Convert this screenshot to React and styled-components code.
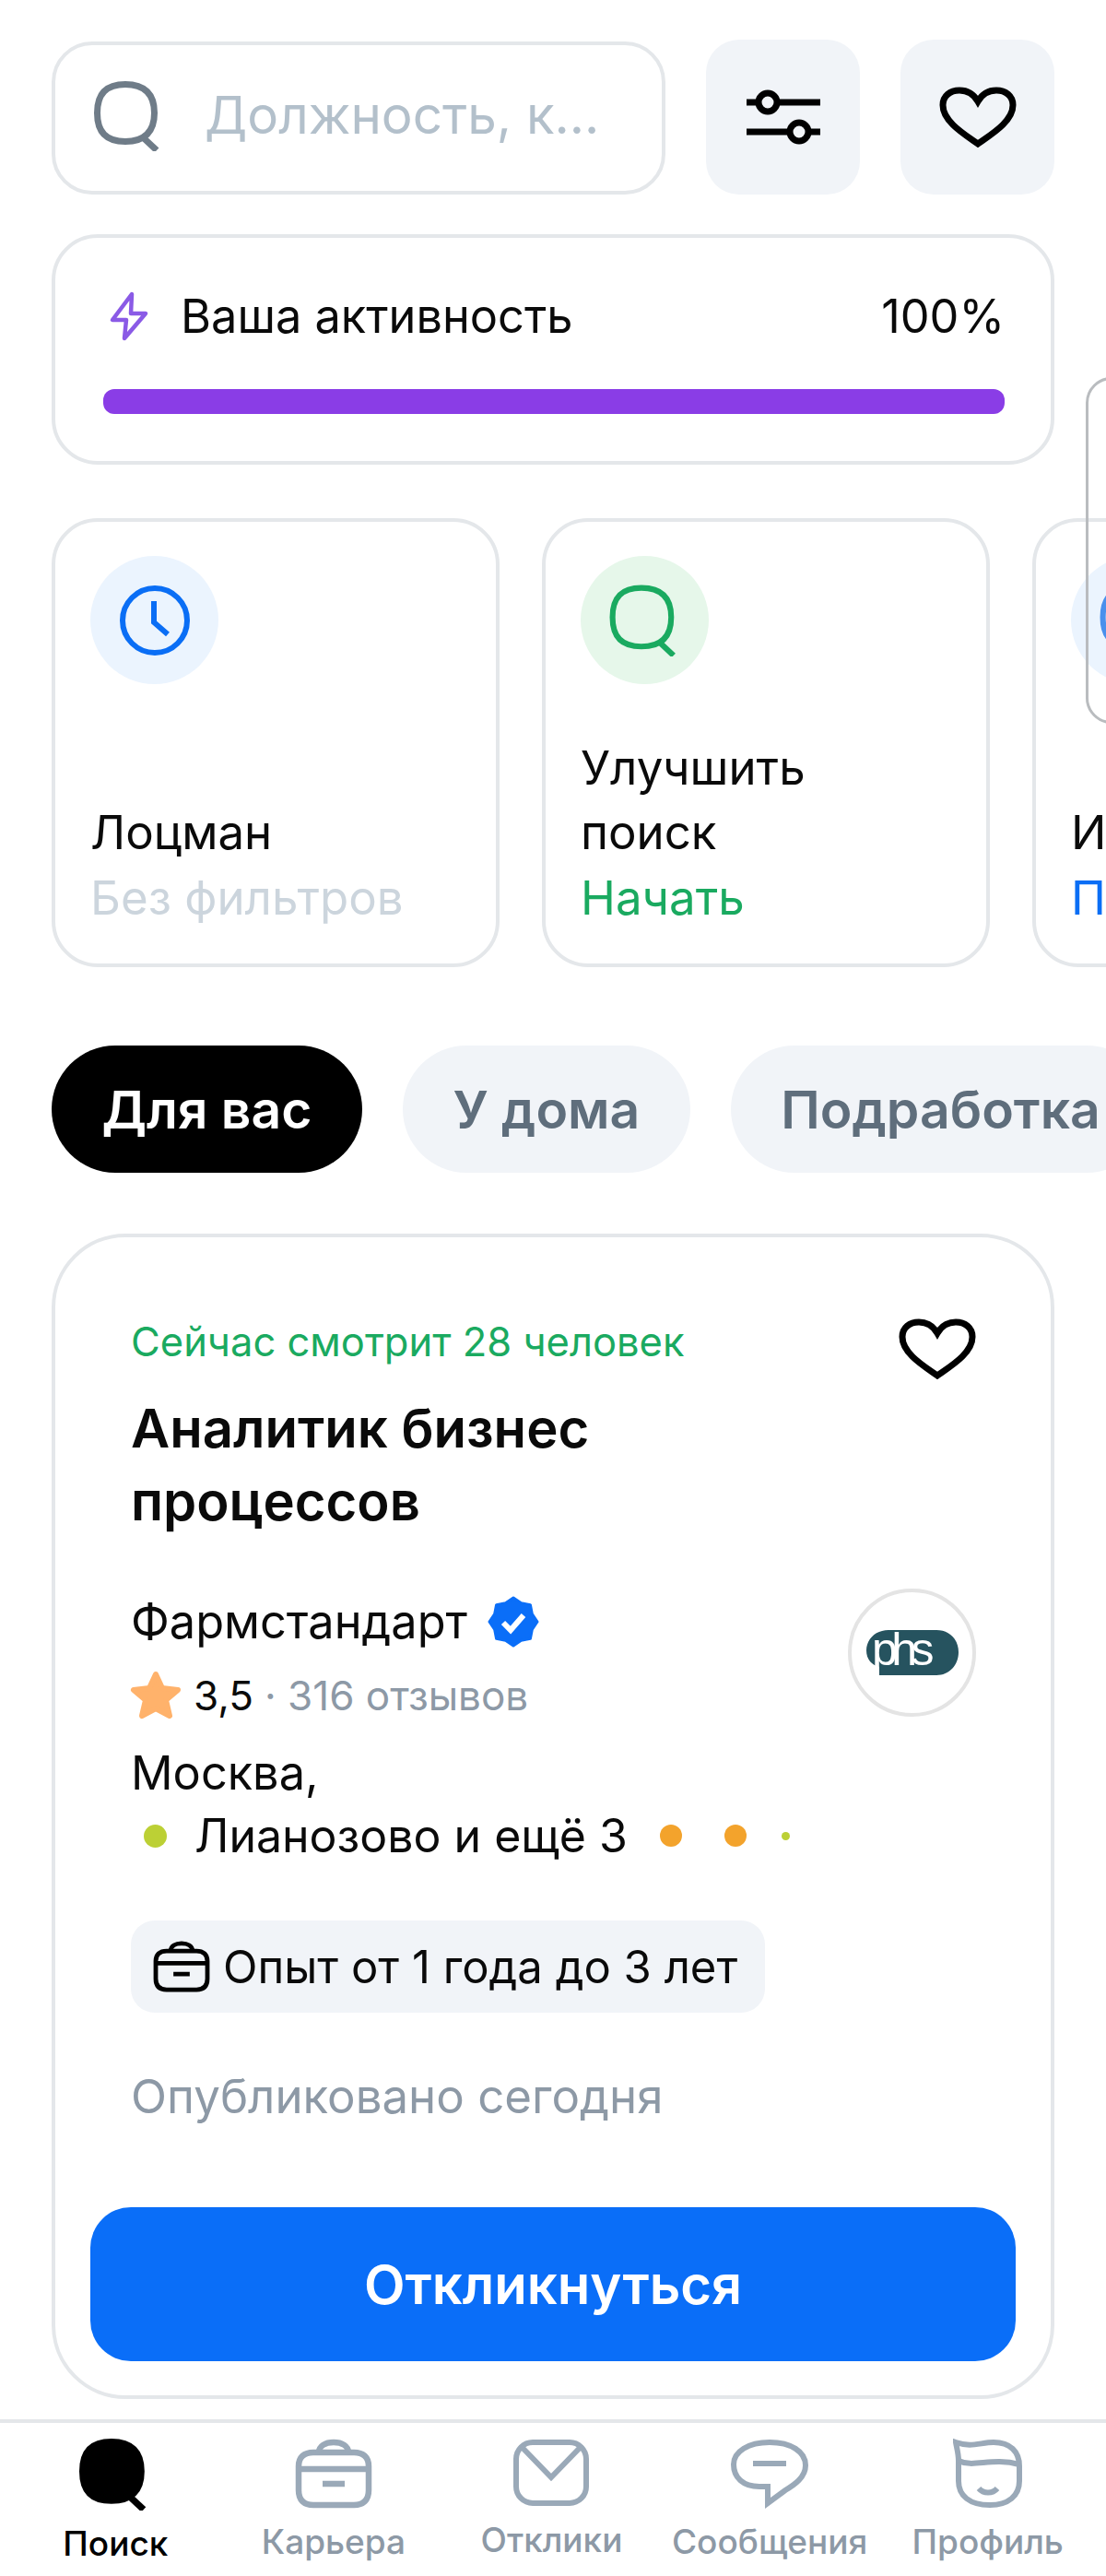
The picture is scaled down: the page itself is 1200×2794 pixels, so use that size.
import React from 'react';
import styled, { createGlobalStyle } from 'styled-components';

const Global = createGlobalStyle`
  html, body { margin: 0; padding: 0; background: #fff; }
  * { box-sizing: border-box; }
  body { font-family: Inter, "Noto Sans", sans-serif; color: #0a0a0a; }
`;

const Page = styled.div`
  position: relative;
  width: 1200px;
  height: 2794px;
  overflow: hidden;
  background: #fff;
  display: flex;
  flex-direction: column;
`;
const TopRow = styled.div`
  display: flex;
  gap: 44px;
  margin: 43px 56px 0;
`;
const SearchBox = styled.div`
  width: 666px;
  height: 166px;
  margin-top: 2px;
  border: 4px solid #e4e7ea;
  border-radius: 44px;
  display: flex;
  align-items: center;
  gap: 44px;
  padding: 0 0 4px 42px;
`;
const Placeholder = styled.span`
  font-size: 56.5px;
  line-height: 70px;
  font-weight: 400;
  color: #b3c0cb;
  white-space: nowrap;
  margin-top: -2px;
`;
const SquareButton = styled.div`
  width: 167px;
  height: 168px;
  background: #f1f4f8;
  border-radius: 36px;
  display: flex;
  align-items: center;
  justify-content: center;
`;
const Outlined = styled.div`
  border: 4px solid #e4e7ea;
  background: #fff;
`;
const ActivityCard = styled(Outlined)`
  margin: 43px 56px 0;
  height: 250px;
  border-radius: 50px;
  padding: 54px 50px 0 52px;
`;
const ActivityHead = styled.div`
  display: flex;
  align-items: center;
  font-size: 50.5px;
  line-height: 62px;
  padding-left: 6px;
`;
const ActivityLabel = styled.span`
  margin-left: 34px;
  flex: 1;
`;
const ProgressTrack = styled.div`
  height: 27px;
  margin-top: 48px;
  border-radius: 12px;
  background: #8a3de6;
`;
const RailWrap = styled.div`
  position: relative;
  margin-top: 58px;
`;
const Rail = styled.div`
  display: flex;
  gap: 46px;
  padding-left: 56px;
  overflow: hidden;
`;
const MiniCard = styled(Outlined)`
  flex: 0 0 486px;
  height: 487px;
  border-radius: 50px;
  padding: 37px 38px 0;
  display: flex;
  flex-direction: column;
`;
const IconCircle = styled.div`
  width: 139px;
  height: 139px;
  flex: none;
  border-radius: 50%;
  background: ${p => p.$bg};
  display: flex;
  align-items: center;
  justify-content: center;
`;
const MiniText = styled.div`
  margin-top: auto;
  margin-bottom: 36px;
  font-size: 51px;
  line-height: 70.5px;
`;
const MiniAction = styled.div`
  color: ${p => p.$color};
`;
const FloatingFrame = styled.div`
  position: absolute;
  left: 1178px;
  top: -153px;
  width: 60px;
  height: 376px;
  border: 3px solid #b9bcbf;
  border-radius: 28px;
`;
const Pills = styled.div`
  display: flex;
  gap: 44px;
  padding-left: 56px;
  margin-top: 85px;
  overflow: hidden;
`;
const Pill = styled.div`
  flex: none;
  height: 138px;
  padding: 0 54.5px;
  border-radius: 69px;
  background: ${p => (p.$active ? '#000' : '#f1f4f8')};
  color: ${p => (p.$active ? '#fff' : '#5f6e7c')};
  font-size: 57px;
  font-weight: 600;
  display: flex;
  align-items: center;
`;
const JobCard = styled(Outlined)`
  margin: 66px 56px 0;
  height: 1264px;
  border-radius: 80px;
  padding: 0 38px 37px;
  display: flex;
  flex-direction: column;
`;
const JobInner = styled.div`
  padding: 0 43px 0 44px;
`;
const ViewersRow = styled.div`
  display: flex;
  justify-content: space-between;
  align-items: flex-start;
  padding-top: 88px;
`;
const Viewers = styled.div`
  color: #1aaa60;
  font-size: 43.5px;
  line-height: 50px;
`;
const JobTitle = styled.h2`
  margin: 14px 0 0;
  font-size: 58px;
  font-weight: 600;
  line-height: 79px;
`;
const CompanyRow = styled.div`
  display: flex;
  justify-content: space-between;
  align-items: flex-start;
  margin-top: 58px;
`;
const CompanyName = styled.div`
  display: flex;
  align-items: center;
  gap: 22px;
  font-size: 50.5px;
  line-height: 66px;
`;
const LogoCircle = styled.div`
  width: 139px;
  height: 139px;
  margin-top: -3px;
  border: 4px solid #e4e4e4;
  border-radius: 50%;
  display: flex;
  align-items: center;
  justify-content: center;
`;
const RatingRow = styled.div`
  display: flex;
  align-items: center;
  gap: 12px;
  font-size: 44px;
  line-height: 60px;
  margin-top: 17px;
  margin-left: -2px;
`;
const Reviews = styled.span`
  color: #8d99a6;
`;
const Location = styled.div`
  font-size: 50.5px;
  line-height: 68px;
  margin-top: 20px;
`;
const MetroRow = styled.div`
  display: flex;
  align-items: center;
  font-size: 50px;
  line-height: 68px;
  padding-left: 14px;
`;
const MetroDot = styled.span`
  flex: none;
  width: ${p => p.$size}px;
  height: ${p => p.$size}px;
  margin-left: ${p => p.$gap || 0}px;
  border-radius: 50%;
  background: ${p => p.$color};
`;
const MetroName = styled.span`
  margin-left: 30px;
`;
const Tag = styled.div`
  display: inline-flex;
  align-items: center;
  gap: 14px;
  height: 100px;
  margin-top: 58px;
  padding: 0 30px 0 24px;
  border-radius: 26px;
  background: #f1f4f8;
  font-size: 49px;
  white-space: nowrap;
`;
const Published = styled.div`
  margin-top: 58px;
  color: #8d99a6;
  font-size: 51px;
  line-height: 66px;
`;
const ApplyButton = styled.div`
  margin-top: auto;
  height: 167px;
  flex: none;
  border-radius: 44px;
  background: #0a6ef8;
  color: #fff;
  font-size: 58px;
  font-weight: 600;
  display: flex;
  align-items: center;
  justify-content: center;
`;
const BottomNav = styled.nav`
  margin-top: 22px;
  flex: 1;
  border-top: 4px solid #e4e7ea;
  display: grid;
  grid-template-columns: repeat(5, 1fr);
  padding: 0 10px 0 7px;
`;
const NavItem = styled.div`
  display: flex;
  flex-direction: column;
  align-items: center;
  padding-top: 17px;
  color: ${p => (p.$active ? '#000' : '#8d99a6')};
  font-size: 37px;
  font-weight: 500;
  white-space: nowrap;
`;
const NavLabel = styled.span`
  margin-top: 14px;
  line-height: 44px;
`;

const Search = ({ size = 76, color, sw = 7, fill = 'none' }) => (
  <svg width={size} height={size} viewBox="0 0 76 76" fill={fill}>
    <path d="M34 3.5C55 3.5 65.5 14 65.5 34.5S55 65.500 34 65.500 3.500 55 3.500 34.500 13 3.500 34 3.500Z" stroke={color} strokeWidth={sw} />
    <path d="M52 60L68 75" stroke={color} strokeWidth={sw} />
  </svg>
);
const Sliders = () => (
  <svg width="80" height="64" viewBox="0 0 80 64" fill="none" stroke="#000" strokeWidth="7">
    <path d="M0 16H13M33 16H80M0 48H47M67 48H80" />
    <circle cx="23" cy="16" r="10" />
    <circle cx="57" cy="48" r="10" />
  </svg>
);
const Heart = ({ w = 84, h = 66 }) => (
  <svg width={w} height={h} viewBox="0 0 84 66" fill="none">
    <path d="M42 62C28 52 4 38 4 20 4 10 12 4 22 4 31 4 38 9 42 16 46 9 53 4 62 4 72 4 80 10 80 20 80 38 56 52 42 62Z" stroke="#000" strokeWidth="7" strokeLinejoin="miter" />
  </svg>
);
const Bolt = () => (
  <svg width="44" height="54" viewBox="0 0 44 54" fill="none">
    <path d="M25 3L4 31H19L17 51 40 24H24Z" stroke="#8a5ae6" strokeWidth="4.500" strokeLinejoin="round" />
  </svg>
);
const Clock = () => (
  <svg width="78" height="78" viewBox="0 0 78 78" fill="none" stroke="#0a6ef5" strokeWidth="6">
    <circle cx="39" cy="39" r="35" />
    <path d="M38 18V41L53 54" />
  </svg>
);
const Briefcase = ({ w = 62, h = 56, color = '#000', sw = 5 }) => (
  <svg width={w} height={h} viewBox="0 0 84 76" fill="none" stroke={color} strokeWidth={sw * 1.3}>
    <path d="M4 30C4 20 10 15 20 15H64C74 15 80 20 80 30V56C80 67 74 72 64 72H20C10 72 4 67 4 56Z" />
    <path d="M26 15C26 8 33 4 42 4S58 8 58 15M4 33H80M30 49H54" />
  </svg>
);
const Mail = () => (
  <svg width="84" height="74" viewBox="0 0 84 74" fill="none" stroke="#9aa9b8" strokeWidth="6">
    <rect x="4" y="4" width="76" height="66" rx="18" />
    <path d="M10 9L42 42 74 9" />
  </svg>
);
const Chat = () => (
  <svg width="86" height="76" viewBox="0 0 86 76" fill="none" stroke="#9aa9b8" strokeWidth="6">
    <path d="M43 4C66 4 82 14 82 29 82 42 70 50 60 56L41 70V52H32C14 52 4 42 4 28 4 14 20 4 43 4Z" />
    <path d="M25 27H61" />
  </svg>
);
const Face = () => (
  <svg width="76" height="76" viewBox="0 0 76 76" fill="none" stroke="#9aa9b8" strokeWidth="6">
    <path d="M3 4C20 10 30 4 44 4 62 4 72 14 72 30V46C72 62 60 72 40 72 18 72 6 62 6 46V24C6 16 4 10 3 4Z" />
    <path d="M6 24C22 32 42 20 72 28M28 54C33 60 43 60 48 54" />
  </svg>
);
const Star = () => (
  <svg width="58" height="56" viewBox="0 0 58 56" fill="#ffb26b" stroke="#ffb26b" strokeWidth="6" strokeLinejoin="round">
    <path d="M29 5L36 20 53 22 40 33 44 50 29 42 14 50 18 33 5 22 22 20Z" />
  </svg>
);
const badgePoints = Array.from({ length: 16 }, (_, i) => {
  const r = i % 2 ? 22 : 26;
  const a = (i * Math.PI) / 8;
  return `${28 + r * Math.sin(a)},${28 - r * Math.cos(a)}`;
}).join(' ');
const Verified = () => (
  <svg width="56" height="56" viewBox="0 0 56 56">
    <polygon points={badgePoints} fill="#0a6ef8" stroke="#0a6ef8" strokeWidth="3" strokeLinejoin="round" />
    <path d="M17 29L25 37 39 21" fill="none" stroke="#fff" strokeWidth="6" />
  </svg>
);
const PhsLogo = () => (
  <svg width="104" height="54" viewBox="0 0 104 54">
    <path d="M26 2H78C92 2 102 12 102 26S92 51 78 51H16V42C8 40 2 34 2 24 2 12 12 2 26 2Z" fill="#26535f" />
    <text x="8" y="40" fontFamily="Liberation Sans, sans-serif" fontSize="50" fill="#fff" letterSpacing="-6.500">phs</text>
  </svg>
);

const navItems = [
  { label: 'Поиск', active: true, icon: <Search size={78} color="#000" fill="#000" /> },
  { label: 'Карьера', icon: <Briefcase w={84} h={76} color="#9aa9b8" /> },
  { label: 'Отклики', icon: <Mail /> },
  { label: 'Сообщения', icon: <Chat /> },
  { label: 'Профиль', icon: <Face /> },
];

export default function App() {
  return (
    <Page>
      <Global />
      <TopRow>
        <SearchBox>
          <Search color="#6f7c88" />
          <Placeholder>Должность, к...</Placeholder>
        </SearchBox>
        <SquareButton><Sliders /></SquareButton>
        <SquareButton><Heart /></SquareButton>
      </TopRow>

      <ActivityCard>
        <ActivityHead>
          <Bolt />
          <ActivityLabel>Ваша активность</ActivityLabel>
          <span>100%</span>
        </ActivityHead>
        <ProgressTrack />
      </ActivityCard>

      <RailWrap>
        <Rail>
          <MiniCard>
            <IconCircle $bg="#ebf4fe"><Clock /></IconCircle>
            <MiniText>
              Лоцман
              <MiniAction $color="#ccd5dd">Без фильтров</MiniAction>
            </MiniText>
          </MiniCard>
          <MiniCard>
            <IconCircle $bg="#e6f7ea"><Search size={78} color="#1aaa60" sw={6} /></IconCircle>
            <MiniText>
              Улучшить<br />поиск
              <MiniAction $color="#1aaa60">Начать</MiniAction>
            </MiniText>
          </MiniCard>
          <MiniCard>
            <IconCircle $bg="#ebf4fe"><Search size={78} color="#4a90ec" sw={6} /></IconCircle>
            <MiniText>
              И
              <MiniAction $color="#0a6ef5">П</MiniAction>
            </MiniText>
          </MiniCard>
        </Rail>
        <FloatingFrame />
      </RailWrap>

      <Pills>
        <Pill $active>Для вас</Pill>
        <Pill>У дома</Pill>
        <Pill>Подработка</Pill>
      </Pills>

      <JobCard>
        <JobInner>
          <ViewersRow>
            <Viewers>Сейчас смотрит 28 человек</Viewers>
            <Heart />
          </ViewersRow>
          <JobTitle>Аналитик бизнес<br />процессов</JobTitle>
          <CompanyRow>
            <div>
              <CompanyName>Фармстандарт <Verified /></CompanyName>
              <RatingRow>
                <Star />
                <span>3,5</span>
                <Reviews>· 316 отзывов</Reviews>
              </RatingRow>
            </div>
            <LogoCircle><PhsLogo /></LogoCircle>
          </CompanyRow>
          <Location>Москва,</Location>
          <MetroRow>
            <MetroDot $size={25} $color="#bcd035" />
            <MetroName>Лианозово и ещё 3</MetroName>
            <MetroDot $size={24} $color="#f3a32c" $gap={35} />
            <MetroDot $size={24} $color="#f3a32c" $gap={46} />
            <MetroDot $size={9} $color="#bcd035" $gap={38} />
          </MetroRow>
          <Tag><Briefcase />Опыт от 1 года до 3 лет</Tag>
          <Published>Опубликовано сегодня</Published>
        </JobInner>
        <ApplyButton>Откликнуться</ApplyButton>
      </JobCard>

      <BottomNav>
        {navItems.map(item => (
          <NavItem key={item.label} $active={item.active}>
            {item.icon}
            <NavLabel>{item.label}</NavLabel>
          </NavItem>
        ))}
      </BottomNav>
    </Page>
  );
}
